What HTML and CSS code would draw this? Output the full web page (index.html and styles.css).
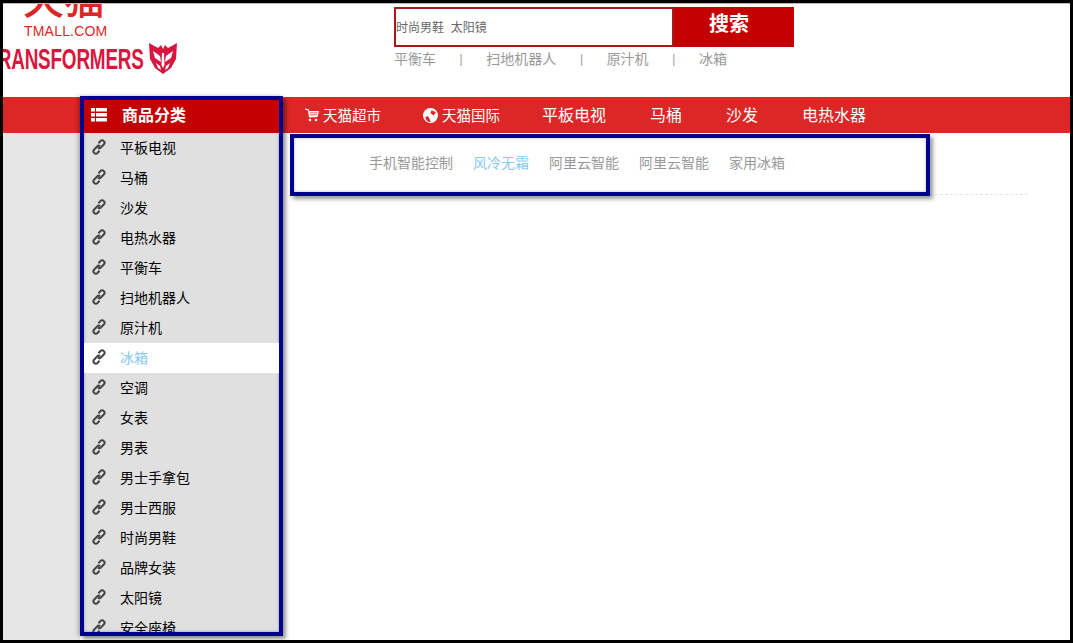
FILE: index.html
```html
<!DOCTYPE html>
<html lang="zh-CN">
<head>
  <meta charset="UTF-8" />
  <title>天猫</title>
  <link rel="stylesheet" href="styles.css">
</head>
<body>
  <div class="page">
    <header class="top">
      <div class="logo">
        <div class="logo-cn">天猫</div>
        <div class="logo-en">TMALL.COM</div>
        <div class="logo-brand">
          <span class="brand-box"><span class="brand-text">TRANSFORMERS</span></span>
          <svg class="brand-mark" width="28" height="32" viewBox="0 0 28 32">
            <path fill="#d8173f" d="M0 0 L9 5 L12 2 L14 6 L16 2 L19 5 L28 0 L27 16 L22 25 L14 31 L6 25 L1 16 Z"/>
            <path fill="#fff" d="M4 8 L11 13 L12 19 L6 15 Z M24 8 L17 13 L16 19 L22 15 Z M13 10 L15 10 L15.5 22 L14 25 L12.5 22 Z M7 20 L11 23 L12 27 L9 25 Z M21 20 L17 23 L16 27 L19 25 Z"/>
          </svg>
        </div>
      </div>
      <div class="search">
        <div class="search-bar">
          <div class="search-input">时尚男鞋&nbsp;&nbsp;太阳镜</div>
          <div class="search-btn">搜索</div>
        </div>
        <div class="hot-words">
          <span class="hot-word">平衡车</span><span class="hot-sep">|</span>
          <span class="hot-word">扫地机器人</span><span class="hot-sep">|</span>
          <span class="hot-word">原汁机</span><span class="hot-sep">|</span>
          <span class="hot-word">冰箱</span>
        </div>
      </div>
    </header>

    <nav class="nav">
      <a class="nav-item nav-small">
        <svg class="nav-icon" width="14" height="14" viewBox="0 0 14 14"><path fill="#fff" d="M14 3 L12.5 9 L4 9.5 L3 2.5 L0 1.5 L0 .5 L4 1.5 L4.3 3 Z"/><path fill="#dd2727" d="M5 4.5h7.5v.8H5zM5 6.5h7v.8H5z"/><circle cx="5" cy="12" r="1.3" fill="#fff"/><circle cx="11" cy="12" r="1.3" fill="#fff"/></svg>
        <span class="nav-label">天猫超市</span>
      </a>
      <a class="nav-item nav-small">
        <svg class="nav-icon" width="15" height="15" viewBox="0 0 14 14"><circle cx="7" cy="7" r="7" fill="#fff"/><path fill="#dd2727" d="M2 9 C5 6 6 9 7 13 C4 13 3 11 2 9 Z M8 2 L12 4 L10 7 L7 5 Z"/></svg>
        <span class="nav-label">天猫国际</span>
      </a>
      <a class="nav-item"><span class="nav-label">平板电视</span></a>
      <a class="nav-item"><span class="nav-label">马桶</span></a>
      <a class="nav-item"><span class="nav-label">沙发</span></a>
      <a class="nav-item"><span class="nav-label">电热水器</span></a>
    </nav>

    <aside class="side">
      <div class="side-title">
        <svg width="16" height="14" viewBox="0 0 16 14"><path fill="#fff" d="M0 0h4v3.6H0zM5 0h11v3.6H5zM0 5h4v3.6H0zM5 5h11v3.6H5zM0 10h4v3.6H0zM5 10h11v3.6H5z"/></svg>
        <span class="side-title-text">商品分类</span>
      </div>
      <ul class="side-list" id="sideList"></ul>
    </aside>

    <main class="main">
      <div class="sub-box">
        <a class="sub-item">手机智能控制</a>
        <a class="sub-item sub-active">风冷无霜</a>
        <a class="sub-item">阿里云智能</a>
        <a class="sub-item">阿里云智能</a>
        <a class="sub-item">家用冰箱</a>
      </div>
      <div class="sub-line"></div>
    </main>
    <div class="left-bg"></div>
  </div>

  <script>
    const items = ["平板电视", "马桶", "沙发", "电热水器", "平衡车", "扫地机器人", "原汁机", "冰箱", "空调", "女表", "男表", "男士手拿包", "男士西服", "时尚男鞋", "品牌女装", "太阳镜", "安全座椅"];
    const icon = '<svg class="link-icon" width="14" height="16" viewBox="0 0 14 16"><g fill="none" stroke="#444" stroke-width="2.1"><path d="M6.5 4.2 L8.6 1.9 A2 2 0 0 1 11.6 1.9 L12 2.3 A2 2 0 0 1 12 5.2 L8.8 8.6 A2 2 0 0 1 6 8.6"/><path d="M7.5 11.8 L5.4 14.1 A2 2 0 0 1 2.4 14.1 L2 13.7 A2 2 0 0 1 2 10.8 L5.2 7.4 A2 2 0 0 1 8 7.4"/></g></svg>';
    let html = "";
    items.forEach(function (name) {
      const cls = name === "冰箱" ? "side-item side-active" : "side-item";
      html += `<li class="${cls}">${icon}<span class="side-label">${name}</span></li>`;
    });
    document.getElementById("sideList").innerHTML = html;
  </script>
</body>
</html>
```
FILE: styles.css
```css
* { box-sizing: border-box; }
html, body { margin: 0; padding: 0; height: 100%; }
body {
  font-family: "Liberation Sans", "Noto Sans CJK SC", sans-serif;
  background: #000;
  overflow: hidden;
}
a { text-decoration: none; }
.page {
  margin: 3px 3px 0 3px;
  height: 637px;
  background: #fff;
  border-top: 1px solid #bbb;
  display: grid;
  grid-template-columns: 77px 203px 1fr;
  grid-template-rows: 93px 36px 1fr;
  overflow: hidden;
}

/* top */
.top {
  grid-column: 1 / 4;
  grid-row: 1;
  display: flex;
  overflow: hidden;
}
.logo {
  width: 391px;
  overflow: hidden;
  flex: none;
}
.logo-cn {
  margin: -25px 0 0 20px;
  font-size: 41px;
  font-weight: 500;
  line-height: 42px;
  height: 42px;
  color: #dd2727;
  white-space: nowrap;
}
.logo-en {
  margin: 3px 0 0 21px;
  font-size: 14px;
  line-height: 15px;
  color: #dd2727;
  letter-spacing: .2px;
}
.logo-brand {
  display: flex;
  align-items: center;
  margin-top: 4px;
  height: 32px;
}
.brand-box {
  width: 146px;
  height: 32px;
  overflow: hidden;
  flex: none;
  display: flex;
  align-items: center;
  justify-content: flex-end;
}
.brand-text {
  font-weight: 700;
  font-size: 30px;
  color: #d8173f;
  white-space: nowrap;
  flex: none;
  transform: scaleX(.63);
  transform-origin: right center;
  letter-spacing: -.3px;
  padding-right: 8px;
}
.brand-mark { flex: none; }
.search { padding-top: 3px; }
.search-bar {
  display: flex;
  width: 400px;
  height: 40px;
  background: #c40000;
}
.search-input {
  width: 276px;
  height: 36px;
  margin: 2px 0 0 2px;
  background: #fff;
  box-shadow: 0 0 0 2px #a81a1a;
  font-size: 12px;
  line-height: 38px;
  color: #666;
}
.search-btn {
  flex: 1;
  text-align: center;
  color: #fff;
  font-size: 20px;
  font-weight: 700;
  line-height: 34px;
  padding-right: 8px;
}
.hot-words {
  display: flex;
  margin-top: 4px;
  font-size: 14px;
  line-height: 16px;
  color: #999;
}
.hot-word { white-space: nowrap; }
.hot-sep { margin: 0 23.6px; font-size: 12px; }

/* nav */
.nav {
  grid-column: 1 / 4;
  grid-row: 2;
  background: #dd2727;
  display: flex;
  align-items: center;
  padding-left: 302px;
  gap: 44px;
}
.nav-item {
  display: flex;
  align-items: center;
  gap: 4px;
  color: #fff;
  font-size: 16px;
  white-space: nowrap;
}
.nav-label { margin-bottom: 2px; }
.nav-small { font-size: 14.5px; margin-right: -2px; }
.nav-icon { flex: none; }

/* side */
.left-bg {
  grid-column: 1;
  grid-row: 3;
  background: #e6e6e6;
}
.side {
  grid-column: 2;
  grid-row: 2 / 4;
  z-index: 2;
  border: 4px solid #000091;
  box-shadow: 3px 3px 4px rgba(0, 0, 0, .4), -2px 0 4px rgba(0, 0, 0, .25), inset 0 0 3px rgba(0, 0, 0, .35);
  background: #e0e0e0;
  margin-top: -1px;
  height: 540px;
  overflow: hidden;
  width: 203px;
}
.side-title {
  height: 33px;
  background: #c40000;
  color: #fff;
  font-size: 16px;
  font-weight: 700;
  display: flex;
  align-items: center;
  gap: 15px;
  padding-left: 7px;
}
.side-title-text { margin-bottom: 6px; }
.side-title svg { margin-bottom: 4px; }
.side-list {
  list-style: none;
  margin: 0;
  padding: 0;
}
.side-item {
  height: 30px;
  display: flex;
  align-items: center;
  padding-left: 8px;
  gap: 14px;
  font-size: 14px;
  color: #000;
}
.side-label { margin-bottom: 3px; }
.side-active {
  background: #fff;
  color: #87c9f0;
}
.link-icon { flex: none; margin-top: -2px; }

/* sub menu */
.main {
  grid-column: 3;
  grid-row: 3;
  padding-top: 1px;
  margin-left: 7px;
}
.sub-box {
  width: 640px;
  height: 62px;
  border: 4px solid #000091;
  box-shadow: 3px 3px 4px rgba(0, 0, 0, .4), inset 0 0 3px rgba(0, 0, 0, .3);
  background: #fff;
  display: flex;
  align-items: center;
  gap: 20px;
  padding: 0 0 7px 75px;
  position: relative;
  z-index: 1;
}
.sub-item {
  font-size: 14px;
  color: #999;
  white-space: nowrap;
}
.sub-active { color: #87c9f0; }
.sub-line {
  width: 738px;
  margin-top: -2px;
  border-bottom: 1px dashed #e6e6e6;
}
```
